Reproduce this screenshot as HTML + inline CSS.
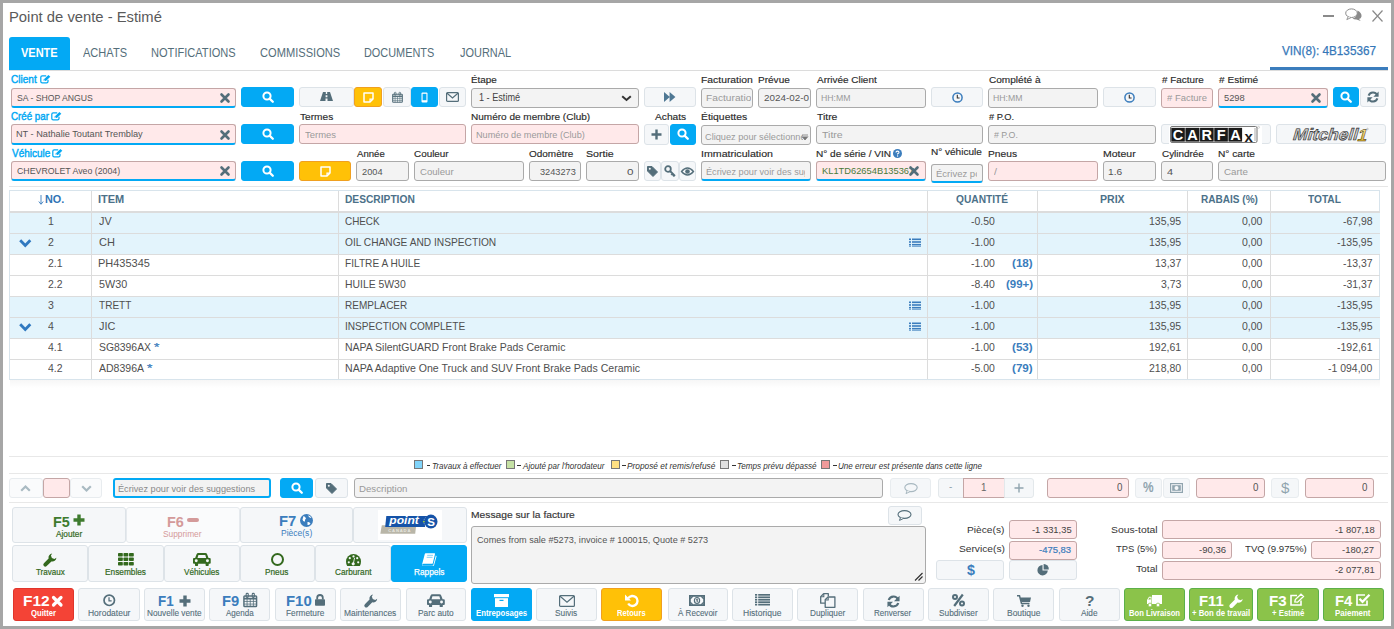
<!DOCTYPE html><html><head><meta charset="utf-8"><style>
*{box-sizing:border-box;margin:0;padding:0}
html,body{width:1394px;height:629px;overflow:hidden;background:#fff}
body{position:relative;font-family:"Liberation Sans",sans-serif}
.a{position:absolute}
.t{position:absolute;white-space:nowrap;line-height:1;transform-origin:0 0}
.inp{background:#f3f3f3;border:1px solid #aaa;border-radius:3px}
.pk{background:#ffe9ea;border:1px solid #c4a6a6;border-radius:3px}
.ul{border-bottom:2px solid #03a9f4}
.btn{background:#f5f7f9;border:1px solid #dde3e8;border-radius:3px}
.bb{background:#03a9f4;border:1px solid #03a9f4;border-radius:3px}
.by{background:#ffc107;border:1px solid #f0a020;border-radius:3px}
.bg{background:#8bc34a;border:1px solid #5cb04a;border-radius:3px}
.br{background:#f44336;border:1px solid #e0352b;border-radius:3px}
.hl{background:#dde3e6}
svg{position:absolute;overflow:visible}
</style></head><body>
<div class="a" style="left:0;top:0;width:1394px;height:629px;border:3px solid #a6a6a6"></div>
<div class="t" style="left:8.52px;top:10px;font-size:14px;color:#5a5a5a;transform:scaleX(1.0564);">Point de vente - Estimé</div>
<div class="a" style="left:1323px;top:15px;width:11px;height:1.5px;background:#8a8a8a"></div>
<svg style="left:1345px;top:8px" width="18" height="14" viewBox="0 0 18 14"><ellipse cx="6.5" cy="5.2" rx="5.8" ry="4.3" fill="#fff" stroke="#8a8a8a" stroke-width="1"/><path d="M3 9 L1.8 11.6 L6 9.6" fill="#fff" stroke="#8a8a8a" stroke-width="0.9"/><path d="M12.5 2.5 Q17 5 16.5 8.5 Q16 10.5 14 11 L15.8 13 L11.5 11.6 Q9 11.7 7.5 10.5 Q12.5 9.5 12.5 2.5Z" fill="#8a8a8a"/></svg>
<svg style="left:1372px;top:10px" width="11" height="12" viewBox="0 0 11 12"><path d="M0.5 0.5L10.5 11.5M10.5 0.5L0.5 11.5" stroke="#8a8a8a" stroke-width="1.2"/></svg>
<div class="a " style="left:9px;top:37px;width:61px;height:33px;background:#03a9f4;border-radius:3px 3px 0 0"></div>
<div class="t" style="left:21.44px;top:46px;font-size:13px;color:#fff;transform:scaleX(0.8464);font-weight:bold;">VENTE</div>
<div class="t" style="left:82.80px;top:46px;font-size:13px;color:#546e7a;transform:scaleX(0.8504);">ACHATS</div>
<div class="t" style="left:150.81px;top:46px;font-size:13px;color:#546e7a;transform:scaleX(0.8521);">NOTIFICATIONS</div>
<div class="t" style="left:260.04px;top:46px;font-size:13px;color:#546e7a;transform:scaleX(0.8540);">COMMISSIONS</div>
<div class="t" style="left:364.23px;top:46px;font-size:13px;color:#546e7a;transform:scaleX(0.8386);">DOCUMENTS</div>
<div class="t" style="left:459.64px;top:46px;font-size:13px;color:#546e7a;transform:scaleX(0.8425);">JOURNAL</div>
<div class="a " style="left:9px;top:70px;width:1379px;height:1px;background:#dcdcdc"></div>
<div class="t" style="left:1281.74px;top:44px;font-size:13px;color:#3577b8;transform:scaleX(0.9037);-webkit-text-stroke:0.25px #3577b8;">VIN(8): 4B135367</div>
<div class="a " style="left:1270px;top:67px;width:118px;height:3px;background:#3b7dbd"></div>
<div class="t" style="left:11.20px;top:74px;font-size:11px;color:#03a9f4;transform:scaleX(0.9127);-webkit-text-stroke:0.45px #03a9f4;">Client</div>
<svg style="left:39.9px;top:74.6px" width="10.5" height="8.5" viewBox="0 0 10.5 8.5"><path d="M6.2 0.9H2.2Q0.8 0.9 0.8 2.3V6.4Q0.8 7.8 2.2 7.8H6.6Q8 7.8 8 6.4V4.8" fill="none" stroke="#03a9f4" stroke-width="1.25"/><path d="M3.6 6L4 4.2L8.4 0L10.3 1.8L5.9 6Z" fill="#03a9f4"/><path d="M4.1 5.8L4.3 4.6L5.4 5.6Z" fill="#fff"/></svg>
<div class="t" style="left:471.21px;top:75px;font-size:9.5px;color:#2a2a2a;transform:scaleX(1.0420);-webkit-text-stroke:0.15px #2a2a2a;">Étape</div>
<div class="t" style="left:700.97px;top:75px;font-size:9.5px;color:#2a2a2a;transform:scaleX(1.0906);-webkit-text-stroke:0.15px #2a2a2a;">Facturation</div>
<div class="t" style="left:758.00px;top:75px;font-size:9.5px;color:#2a2a2a;transform:scaleX(1.0561);-webkit-text-stroke:0.15px #2a2a2a;">Prévue</div>
<div class="t" style="left:816.90px;top:75px;font-size:9.5px;color:#2a2a2a;transform:scaleX(1.0465);-webkit-text-stroke:0.15px #2a2a2a;">Arrivée Client</div>
<div class="t" style="left:988.50px;top:75px;font-size:9.5px;color:#2a2a2a;transform:scaleX(1.0599);-webkit-text-stroke:0.15px #2a2a2a;">Complété à</div>
<div class="t" style="left:1162.05px;top:75px;font-size:9.5px;color:#2a2a2a;transform:scaleX(1.0388);-webkit-text-stroke:0.15px #2a2a2a;"># Facture</div>
<div class="t" style="left:1219.25px;top:75px;font-size:9.5px;color:#2a2a2a;transform:scaleX(1.0609);-webkit-text-stroke:0.15px #2a2a2a;"># Estimé</div>
<div class="t" style="left:11.21px;top:111px;font-size:11px;color:#03a9f4;transform:scaleX(0.8865);-webkit-text-stroke:0.45px #03a9f4;">Créé par</div>
<svg style="left:51.2px;top:111.6px" width="10.5" height="8.5" viewBox="0 0 10.5 8.5"><path d="M6.2 0.9H2.2Q0.8 0.9 0.8 2.3V6.4Q0.8 7.8 2.2 7.8H6.6Q8 7.8 8 6.4V4.8" fill="none" stroke="#03a9f4" stroke-width="1.25"/><path d="M3.6 6L4 4.2L8.4 0L10.3 1.8L5.9 6Z" fill="#03a9f4"/><path d="M4.1 5.8L4.3 4.6L5.4 5.6Z" fill="#fff"/></svg>
<div class="t" style="left:299.70px;top:112px;font-size:9.5px;color:#2a2a2a;transform:scaleX(1.0673);-webkit-text-stroke:0.15px #2a2a2a;">Termes</div>
<div class="t" style="left:471.20px;top:112px;font-size:9.5px;color:#2a2a2a;transform:scaleX(1.0544);-webkit-text-stroke:0.15px #2a2a2a;">Numéro de membre (Club)</div>
<div class="t" style="left:654.80px;top:112px;font-size:9.5px;color:#2a2a2a;transform:scaleX(1.0735);-webkit-text-stroke:0.15px #2a2a2a;">Achats</div>
<div class="t" style="left:700.97px;top:112px;font-size:9.5px;color:#2a2a2a;transform:scaleX(1.0915);-webkit-text-stroke:0.15px #2a2a2a;">Étiquettes</div>
<div class="t" style="left:816.69px;top:112px;font-size:9.5px;color:#2a2a2a;transform:scaleX(1.0943);-webkit-text-stroke:0.15px #2a2a2a;">Titre</div>
<div class="t" style="left:988.95px;top:112px;font-size:9.5px;color:#2a2a2a;transform:scaleX(0.9800);-webkit-text-stroke:0.15px #2a2a2a;"># P.O.</div>
<div class="t" style="left:11.65px;top:148px;font-size:11px;color:#03a9f4;transform:scaleX(0.9079);-webkit-text-stroke:0.45px #03a9f4;">Véhicule</div>
<svg style="left:51.6px;top:148.6px" width="10.5" height="8.5" viewBox="0 0 10.5 8.5"><path d="M6.2 0.9H2.2Q0.8 0.9 0.8 2.3V6.4Q0.8 7.8 2.2 7.8H6.6Q8 7.8 8 6.4V4.8" fill="none" stroke="#03a9f4" stroke-width="1.25"/><path d="M3.6 6L4 4.2L8.4 0L10.3 1.8L5.9 6Z" fill="#03a9f4"/><path d="M4.1 5.8L4.3 4.6L5.4 5.6Z" fill="#fff"/></svg>
<div class="t" style="left:357.30px;top:149px;font-size:9.5px;color:#2a2a2a;transform:scaleX(1.0101);-webkit-text-stroke:0.15px #2a2a2a;">Année</div>
<div class="t" style="left:414.31px;top:149px;font-size:9.5px;color:#2a2a2a;transform:scaleX(1.0419);-webkit-text-stroke:0.15px #2a2a2a;">Couleur</div>
<div class="t" style="left:529.05px;top:149px;font-size:9.5px;color:#2a2a2a;transform:scaleX(1.0490);-webkit-text-stroke:0.15px #2a2a2a;">Odomètre</div>
<div class="t" style="left:586.12px;top:149px;font-size:9.5px;color:#2a2a2a;transform:scaleX(1.1153);-webkit-text-stroke:0.15px #2a2a2a;">Sortie</div>
<div class="t" style="left:700.84px;top:149px;font-size:9.5px;color:#2a2a2a;transform:scaleX(1.1170);-webkit-text-stroke:0.15px #2a2a2a;">Immatriculation</div>
<div class="t" style="left:816.29px;top:149px;font-size:9.5px;color:#2a2a2a;transform:scaleX(1.0606);-webkit-text-stroke:0.15px #2a2a2a;">N° de série / VIN</div>
<svg style="left:893px;top:149px" width="9" height="9" viewBox="0 0 9 9"><circle cx="4.5" cy="4.5" r="4.5" fill="#3b7dbd"/><path d="M3 3.6Q3 2.1 4.5 2.1Q6 2.1 6 3.4Q6 4.3 4.6 4.8V5.6" fill="none" stroke="#fff" stroke-width="1.1"/><circle cx="4.6" cy="7" r="0.65" fill="#fff"/></svg>
<div class="t" style="left:931.10px;top:147px;font-size:9.5px;color:#2a2a2a;transform:scaleX(1.0537);-webkit-text-stroke:0.15px #2a2a2a;">N° véhicule</div>
<div class="t" style="left:988.18px;top:149px;font-size:9.5px;color:#2a2a2a;transform:scaleX(1.0797);-webkit-text-stroke:0.15px #2a2a2a;">Pneus</div>
<div class="t" style="left:1103.26px;top:149px;font-size:9.5px;color:#2a2a2a;transform:scaleX(1.1033);-webkit-text-stroke:0.15px #2a2a2a;">Moteur</div>
<div class="t" style="left:1161.60px;top:149px;font-size:9.5px;color:#2a2a2a;transform:scaleX(1.0424);-webkit-text-stroke:0.15px #2a2a2a;">Cylindrée</div>
<div class="t" style="left:1218.49px;top:149px;font-size:9.5px;color:#2a2a2a;transform:scaleX(1.0722);-webkit-text-stroke:0.15px #2a2a2a;">N° carte</div>
<div class="a pk ul" style="left:11px;top:88px;width:225px;height:20px;"></div>
<div class="t" style="left:16.81px;top:93px;font-size:9.5px;color:#555;transform:scaleX(0.9106);">SA - SHOP ANGUS</div>
<svg style="left:219.5px;top:93px" width="10" height="10" viewBox="0 0 10 10"><path d="M1.5 1.5L8.5 8.5M8.5 1.5L1.5 8.5" stroke="#546e7a" stroke-width="2.6" stroke-linecap="round"/></svg>
<div class="a bb" style="left:241px;top:87px;width:53px;height:20px;"></div>
<svg style="left:261.5px;top:91px" width="12" height="12" viewBox="0 0 12 12"><circle cx="5" cy="5" r="3.6" fill="none" stroke="#fff" stroke-width="2"/><path d="M7.6 7.6L10.8 10.8" stroke="#fff" stroke-width="2.3" stroke-linecap="round"/></svg>
<div class="a btn" style="left:299px;top:87px;width:55px;height:20px;"></div>
<svg style="left:320px;top:92px" width="13" height="9" viewBox="0 0 13 9"><path d="M3 0H5.8V2H7.2V0H10L13 9H7.5V6.5H5.5V9H0Z M5.6 3.2H7.4V5.2H5.6Z" fill="#546e7a" fill-rule="evenodd"/></svg>
<div class="a by" style="left:354px;top:87px;width:28px;height:20px;"></div>
<svg style="left:362.5px;top:91.5px" width="11" height="11" viewBox="0 0 11 11"><path d="M1 1H10V7L7 10H1Z" fill="none" stroke="#fff" stroke-width="1.5" stroke-linejoin="round"/><path d="M7 10V7.2H10" fill="none" stroke="#fff" stroke-width="1.2"/></svg>
<div class="a btn" style="left:383px;top:87px;width:28px;height:20px;"></div>
<svg style="left:391.5px;top:91.5px" width="11" height="11" viewBox="0 0 11 11"><rect x="0.7" y="2.2" width="9.6" height="8.1" rx="0.6" fill="none" stroke="#546e7a" stroke-width="1.1"/><path d="M0.7 4.3H10.3" stroke="#546e7a" stroke-width="1.3"/><path d="M0.7 6.4H10.3M0.7 8.4H10.3M3.1 4.3V10.3M5.5 4.3V10.3M7.9 4.3V10.3" stroke="#546e7a" stroke-width="0.6"/><rect x="2.4" y="0.3" width="1.6" height="3" rx="0.6" fill="none" stroke="#546e7a" stroke-width="0.8"/><rect x="7" y="0.3" width="1.6" height="3" rx="0.6" fill="none" stroke="#546e7a" stroke-width="0.8"/></svg>
<div class="a bb" style="left:411px;top:87px;width:27px;height:20px;"></div>
<svg style="left:421px;top:91.5px" width="7" height="11" viewBox="0 0 7 11"><rect x="0.5" y="0.5" width="6" height="10" rx="1" fill="#fff"/><rect x="1.6" y="1.8" width="3.8" height="6.4" fill="#03a9f4"/></svg>
<div class="a btn" style="left:439px;top:87px;width:27px;height:20px;"></div>
<svg style="left:446px;top:92px" width="13" height="10" viewBox="0 0 13 10"><rect x="0.6" y="0.6" width="11.8" height="8.8" rx="1" fill="none" stroke="#546e7a" stroke-width="1.2"/><path d="M0.8 1L6.5 6.0L12.2 1" fill="none" stroke="#546e7a" stroke-width="1.2"/></svg>
<div class="a inp" style="left:471px;top:88px;width:168px;height:20px;"></div>
<div class="t" style="left:479.42px;top:92px;font-size:10.5px;color:#444;transform:scaleX(0.8698);">1 - Estimé</div>
<svg style="left:620.8px;top:95px" width="11" height="6.5" viewBox="0 0 11 6.5"><path d="M1.2 1.2L5.5 5.0L9.8 1.2" fill="none" stroke="#333" stroke-width="2"/></svg>
<div class="a btn" style="left:644px;top:87px;width:52px;height:20px;"></div>
<svg style="left:663.8px;top:92.3px" width="11.5" height="10" viewBox="0 0 11.5 10"><path d="M0 0L5.8 5L0 10Z M5.6 0L11.4 5L5.6 10Z" fill="#4f7894"/></svg>
<div class="a inp" style="left:701px;top:88px;width:52px;height:20px;"></div>
<div class="a" style="left:702px;top:93px;width:49px;height:14.25px;overflow:hidden"><div class="t" style="left:3.98px;top:0px;font-size:9.5px;color:#9a9a9a;transform:scaleX(1.0732);">Facturation</div></div>
<div class="a inp" style="left:758px;top:88px;width:53px;height:20px;"></div>
<div class="a" style="left:759px;top:93px;width:50px;height:14.25px;overflow:hidden"><div class="t" style="left:5.11px;top:0px;font-size:9.5px;color:#555;transform:scaleX(1.0390);">2024-02-07</div></div>
<div class="a inp" style="left:816px;top:88px;width:110px;height:20px;"></div>
<div class="t" style="left:821.31px;top:93px;font-size:9.5px;color:#9a9a9a;transform:scaleX(0.9139);">HH:MM</div>
<div class="a btn" style="left:931px;top:87px;width:52px;height:20px;"></div>
<svg style="left:951.5px;top:91.5px" width="11" height="11" viewBox="0 0 11 11"><circle cx="5.5" cy="5.5" r="4.6" fill="none" stroke="#3b7dbd" stroke-width="1.5"/><path d="M5.3 2.8V6H7.6" fill="none" stroke="#333" stroke-width="1.1"/></svg>
<div class="a inp" style="left:988px;top:88px;width:110px;height:20px;"></div>
<div class="t" style="left:993.31px;top:93px;font-size:9.5px;color:#9a9a9a;transform:scaleX(0.9139);">HH:MM</div>
<div class="a btn" style="left:1103px;top:87px;width:53px;height:20px;"></div>
<svg style="left:1124px;top:91.5px" width="11" height="11" viewBox="0 0 11 11"><circle cx="5.5" cy="5.5" r="4.6" fill="none" stroke="#3b7dbd" stroke-width="1.5"/><path d="M5.3 2.8V6H7.6" fill="none" stroke="#333" stroke-width="1.1"/></svg>
<div class="a pk" style="left:1161px;top:88px;width:52px;height:20px;"></div>
<div class="t" style="left:1167.25px;top:93px;font-size:9.5px;color:#9a9a9a;transform:scaleX(0.9959);"># Facture</div>
<div class="a pk ul" style="left:1218px;top:88px;width:110px;height:20px;"></div>
<div class="t" style="left:1223.93px;top:93px;font-size:9.5px;color:#555;transform:scaleX(0.9815);">5298</div>
<svg style="left:1311px;top:93px" width="10" height="10" viewBox="0 0 10 10"><path d="M1.5 1.5L8.5 8.5M8.5 1.5L1.5 8.5" stroke="#546e7a" stroke-width="2.6" stroke-linecap="round"/></svg>
<div class="a bb" style="left:1333px;top:87px;width:26px;height:20px;"></div>
<svg style="left:1340px;top:91px" width="12" height="12" viewBox="0 0 12 12"><circle cx="5" cy="5" r="3.6" fill="none" stroke="#fff" stroke-width="2"/><path d="M7.6 7.6L10.8 10.8" stroke="#fff" stroke-width="2.3" stroke-linecap="round"/></svg>
<div class="a btn" style="left:1360px;top:87px;width:26px;height:20px;"></div>
<svg style="left:1367px;top:91px" width="12" height="12" viewBox="0 0 12 12"><path d="M10.2 4.2A4.6 4.6 0 0 0 1.6 4.6" fill="none" stroke="#546e7a" stroke-width="2"/><path d="M11.6 0.6V5.8H6.4Z" fill="#546e7a"/><path d="M1.8 7.8A4.6 4.6 0 0 0 10.4 7.4" fill="none" stroke="#546e7a" stroke-width="2"/><path d="M0.4 11.4V6.2H5.6Z" fill="#546e7a"/></svg>
<div class="a pk ul" style="left:11px;top:124px;width:225px;height:21px;"></div>
<div class="t" style="left:16.47px;top:129px;font-size:9.5px;color:#555;transform:scaleX(0.9656);">NT - Nathalie Toutant Tremblay</div>
<svg style="left:219.5px;top:129.5px" width="10" height="10" viewBox="0 0 10 10"><path d="M1.5 1.5L8.5 8.5M8.5 1.5L1.5 8.5" stroke="#546e7a" stroke-width="2.6" stroke-linecap="round"/></svg>
<div class="a bb" style="left:241px;top:124px;width:53px;height:20px;"></div>
<svg style="left:261.5px;top:128px" width="12" height="12" viewBox="0 0 12 12"><circle cx="5" cy="5" r="3.6" fill="none" stroke="#fff" stroke-width="2"/><path d="M7.6 7.6L10.8 10.8" stroke="#fff" stroke-width="2.3" stroke-linecap="round"/></svg>
<div class="a pk" style="left:299px;top:124px;width:167px;height:20px;"></div>
<div class="t" style="left:304.81px;top:130px;font-size:9.5px;color:#9a9a9a;transform:scaleX(0.9955);">Termes</div>
<div class="a pk" style="left:471px;top:124px;width:168px;height:20px;"></div>
<div class="t" style="left:476.27px;top:130px;font-size:9.5px;color:#9a9a9a;transform:scaleX(0.9630);">Numéro de membre (Club)</div>
<div class="a btn" style="left:644px;top:124px;width:25px;height:21px;"></div>
<svg style="left:651px;top:129px" width="11" height="11" viewBox="0 0 11 11"><path d="M5.5 0.5V10.5M0.5 5.5H10.5" stroke="#546e7a" stroke-width="2.4"/></svg>
<div class="a bb" style="left:670px;top:124px;width:26px;height:21px;"></div>
<svg style="left:677px;top:128px" width="12" height="12" viewBox="0 0 12 12"><circle cx="5" cy="5" r="3.6" fill="none" stroke="#fff" stroke-width="2"/><path d="M7.6 7.6L10.8 10.8" stroke="#fff" stroke-width="2.3" stroke-linecap="round"/></svg>
<div class="a inp" style="left:701px;top:125px;width:110px;height:20px;"></div>
<div class="a" style="left:702px;top:132px;width:103px;height:14.25px;overflow:hidden"><div class="t" style="left:2.54px;top:0px;font-size:9.5px;color:#9a9a9a;transform:scaleX(0.9668);">Cliquez pour sélectionner</div></div>
<div class="a " style="left:803px;top:133px;width:6px;height:8px;background:#f3f3f3"></div>
<svg style="left:802px;top:135px" width="6" height="5" viewBox="0 0 6 5"><path d="M0 0H6M0 1.5L3 5L6 1.5" stroke="#777" fill="#777" stroke-width="0.8"/></svg>
<div class="a inp" style="left:816px;top:125px;width:167px;height:19px;"></div>
<div class="t" style="left:821.79px;top:130px;font-size:9.5px;color:#9a9a9a;transform:scaleX(1.1110);">Titre</div>
<div class="a inp" style="left:988px;top:125px;width:168px;height:19px;"></div>
<div class="t" style="left:993.96px;top:130px;font-size:9.5px;color:#9a9a9a;transform:scaleX(0.9276);"># P.O.</div>
<div class="a btn" style="left:1161px;top:124px;width:110px;height:20px;"></div>
<div class="a " style="left:1169px;top:125.5px;width:92.5px;height:18.0px;background:#fff"></div>
<svg style="left:1170.4px;top:126.2px" width="88" height="17" viewBox="0 0 88 17"><rect x="0.5" y="0.5" width="86.5" height="16" rx="1.5" fill="#fff" stroke="#777" stroke-width="1"/><rect x="1.4" y="1.9" width="70.6" height="13.6" fill="#999"/><rect x="1.4" y="1.9" width="13.3" height="13.6" fill="#1a1a1a"/><text x="8.05" y="14.2" text-anchor="middle" font-family="Liberation Sans" font-weight="bold" font-size="14.5" fill="#fff">C</text><rect x="15.75" y="1.9" width="13.3" height="13.6" fill="#1a1a1a"/><text x="22.4" y="14.2" text-anchor="middle" font-family="Liberation Sans" font-weight="bold" font-size="14.5" fill="#fff">A</text><rect x="30.099999999999998" y="1.9" width="13.3" height="13.6" fill="#1a1a1a"/><text x="36.75" y="14.2" text-anchor="middle" font-family="Liberation Sans" font-weight="bold" font-size="14.5" fill="#fff">R</text><rect x="44.449999999999996" y="1.9" width="13.3" height="13.6" fill="#1a1a1a"/><text x="51.099999999999994" y="14.2" text-anchor="middle" font-family="Liberation Sans" font-weight="bold" font-size="14.5" fill="#fff">F</text><rect x="58.8" y="1.9" width="13.3" height="13.6" fill="#1a1a1a"/><text x="65.45" y="14.2" text-anchor="middle" font-family="Liberation Sans" font-weight="bold" font-size="14.5" fill="#fff">A</text><text x="78.6" y="15.5" text-anchor="middle" font-family="Liberation Sans" font-weight="bold" font-size="15" fill="#1a1a1a">x</text><path d="M85 2V15" stroke="#999" stroke-width="0.8"/><circle cx="88.5" cy="1.3" r="1" fill="none" stroke="#999" stroke-width="0.4"/></svg>
<div class="a btn" style="left:1276px;top:124px;width:110px;height:20px;"></div>
<svg style="left:1290px;top:126.5px" width="80" height="16" viewBox="0 0 80 16"><defs><linearGradient id="mg" x1="0" y1="0" x2="0" y2="1"><stop offset="0" stop-color="#a8a8a8"/><stop offset="0.5" stop-color="#d8d8d8"/><stop offset="1" stop-color="#9a9a9a"/></linearGradient><linearGradient id="mg2" x1="0" y1="0" x2="0" y2="1"><stop offset="0" stop-color="#fff3b0"/><stop offset="1" stop-color="#d8a818"/></linearGradient></defs><g transform="translate(0,0.5) scale(1,0.86) skewX(-14)"><text x="5.5" y="14.5" font-family="Liberation Sans" font-weight="bold" font-size="19" fill="url(#mg)" stroke="#2a2a2a" stroke-width="0.7" textLength="65" lengthAdjust="spacingAndGlyphs">Mitchell</text><text x="70.5" y="15.8" font-family="Liberation Sans" font-weight="bold" font-size="20" fill="url(#mg2)" stroke="#3a2a05" stroke-width="0.6" textLength="9.5" lengthAdjust="spacingAndGlyphs">1</text></g><circle cx="77.5" cy="2" r="0.8" fill="none" stroke="#888" stroke-width="0.4"/></svg>
<div class="a pk ul" style="left:11px;top:161px;width:225px;height:20px;"></div>
<div class="t" style="left:16.76px;top:166px;font-size:9.5px;color:#555;transform:scaleX(0.9246);">CHEVROLET Aveo (2004)</div>
<svg style="left:219.5px;top:166px" width="10" height="10" viewBox="0 0 10 10"><path d="M1.5 1.5L8.5 8.5M8.5 1.5L1.5 8.5" stroke="#546e7a" stroke-width="2.6" stroke-linecap="round"/></svg>
<div class="a bb" style="left:241px;top:161px;width:53px;height:20px;"></div>
<svg style="left:261.5px;top:165px" width="12" height="12" viewBox="0 0 12 12"><circle cx="5" cy="5" r="3.6" fill="none" stroke="#fff" stroke-width="2"/><path d="M7.6 7.6L10.8 10.8" stroke="#fff" stroke-width="2.3" stroke-linecap="round"/></svg>
<div class="a by" style="left:299px;top:161px;width:52px;height:20px;"></div>
<svg style="left:320px;top:165.5px" width="11" height="11" viewBox="0 0 11 11"><path d="M1 1H10V7L7 10H1Z" fill="none" stroke="#fff" stroke-width="1.5" stroke-linejoin="round"/><path d="M7 10V7.2H10" fill="none" stroke="#fff" stroke-width="1.2"/></svg>
<div class="a inp" style="left:356px;top:161px;width:53px;height:20px;"></div>
<div class="t" style="left:362.14px;top:167px;font-size:9.5px;color:#555;transform:scaleX(0.9717);">2004</div>
<div class="a inp" style="left:414px;top:161px;width:110px;height:20px;"></div>
<div class="t" style="left:419.52px;top:167px;font-size:9.5px;color:#9a9a9a;transform:scaleX(1.0113);">Couleur</div>
<div class="a inp" style="left:529px;top:161px;width:52px;height:20px;"></div>
<div class="t" style="left:539.73px;top:167px;font-size:9.5px;color:#555;transform:scaleX(0.9670);">3243273</div>
<div class="a inp" style="left:586px;top:161px;width:53px;height:20px;"></div>
<div class="t" style="left:627.43px;top:167px;font-size:9.5px;color:#555;transform:scaleX(1.2281);">0</div>
<div class="a btn" style="left:644px;top:161px;width:17px;height:20px;"></div>
<svg style="left:646.5px;top:165.5px" width="11" height="11" viewBox="0 0 11 11"><path d="M0.5 0.5H5L10.5 6L6 10.5L0.5 5Z" fill="#546e7a" stroke="#546e7a" stroke-linejoin="round"/><circle cx="2.8" cy="2.8" r="1" fill="#f5f7f9"/></svg>
<div class="a btn" style="left:661px;top:161px;width:18px;height:20px;"></div>
<svg style="left:664px;top:165px" width="12" height="12" viewBox="0 0 12 12"><circle cx="4" cy="4" r="2.8" fill="none" stroke="#546e7a" stroke-width="1.8"/><path d="M6 6L11 11M8.5 8.5L7.2 9.8M10 10L8.8 11.2" stroke="#546e7a" stroke-width="1.8"/></svg>
<div class="a btn" style="left:679px;top:161px;width:17px;height:20px;"></div>
<svg style="left:681px;top:166.5px" width="13" height="9" viewBox="0 0 13 9"><path d="M0.5 4.5Q6.5 -2.5 12.5 4.5Q6.5 11.5 0.5 4.5Z" fill="none" stroke="#546e7a" stroke-width="1.3"/><circle cx="6.5" cy="4.5" r="2.3" fill="#546e7a"/></svg>
<div class="a inp ul" style="left:701px;top:161px;width:110px;height:20px;"></div>
<div class="a" style="left:702px;top:167px;width:103px;height:14.25px;overflow:hidden"><div class="t" style="left:4.27px;top:0px;font-size:9.5px;color:#9a9a9a;transform:scaleX(0.9650);">Écrivez pour voir des suggestions</div></div>
<div class="a pk ul" style="left:816px;top:161px;width:110px;height:20px;"></div>
<div class="t" style="left:821.65px;top:166px;font-size:9.5px;color:#4a7a3a;transform:scaleX(0.9809);">KL1TD62654B135367</div>
<svg style="left:909px;top:166.3px" width="10" height="10" viewBox="0 0 10 10"><path d="M1.5 1.5L8.5 8.5M8.5 1.5L1.5 8.5" stroke="#546e7a" stroke-width="2.6" stroke-linecap="round"/></svg>
<div class="a inp ul" style="left:931px;top:164px;width:52px;height:19px;"></div>
<div class="a" style="left:932px;top:169px;width:45px;height:14.25px;overflow:hidden"><div class="t" style="left:4.24px;top:0px;font-size:9.5px;color:#9a9a9a;transform:scaleX(1.0025);">Écrivez pour voir</div></div>
<div class="a pk" style="left:988px;top:161px;width:110px;height:20px;"></div>
<div class="t" style="left:994.00px;top:167px;font-size:9.5px;color:#9a9a9a;transform:scaleX(1.1278);">/</div>
<div class="a inp" style="left:1103px;top:161px;width:53px;height:20px;"></div>
<div class="t" style="left:1108.24px;top:167px;font-size:9.5px;color:#555;transform:scaleX(1.0733);">1.6</div>
<div class="a inp" style="left:1161px;top:161px;width:52px;height:20px;"></div>
<div class="t" style="left:1166.78px;top:167px;font-size:9.5px;color:#555;transform:scaleX(1.1464);">4</div>
<div class="a inp" style="left:1218px;top:161px;width:168px;height:20px;"></div>
<div class="t" style="left:1223.51px;top:167px;font-size:9.5px;color:#9a9a9a;transform:scaleX(1.0302);">Carte</div>
<div class="a " style="left:9px;top:186px;width:1379px;height:1px;background:#e6e6e6"></div>
<div class="a " style="left:10px;top:380px;width:1370px;height:8px;background:linear-gradient(#f6f6f6,#fff)"></div>
<div class="a " style="left:9px;top:190px;width:1371px;height:190px;border:1px solid #d8e4ec;background:#fff"></div>
<div class="a " style="left:10px;top:212px;width:1370px;height:21px;background:#e3f4fc"></div>
<div class="a " style="left:10px;top:233px;width:1370px;height:21px;background:#e3f4fc"></div>
<div class="a " style="left:10px;top:296px;width:1370px;height:21px;background:#e3f4fc"></div>
<div class="a " style="left:10px;top:317px;width:1370px;height:21px;background:#e3f4fc"></div>
<div class="a " style="left:10px;top:211px;width:1370px;height:2px;background:#dcdcdc"></div>
<div class="a " style="left:10px;top:233px;width:1370px;height:1px;background:#dcdcdc"></div>
<div class="a " style="left:10px;top:254px;width:1370px;height:1px;background:#dcdcdc"></div>
<div class="a " style="left:10px;top:275px;width:1370px;height:1px;background:#dcdcdc"></div>
<div class="a " style="left:10px;top:296px;width:1370px;height:1px;background:#dcdcdc"></div>
<div class="a " style="left:10px;top:317px;width:1370px;height:1px;background:#dcdcdc"></div>
<div class="a " style="left:10px;top:338px;width:1370px;height:1px;background:#dcdcdc"></div>
<div class="a " style="left:10px;top:359px;width:1370px;height:1px;background:#dcdcdc"></div>
<div class="a " style="left:91px;top:191px;width:1px;height:188px;background:#dcdcdc"></div>
<div class="a " style="left:338px;top:191px;width:1px;height:188px;background:#dcdcdc"></div>
<div class="a " style="left:927px;top:191px;width:1px;height:188px;background:#dcdcdc"></div>
<div class="a " style="left:1037px;top:191px;width:1px;height:188px;background:#dcdcdc"></div>
<div class="a " style="left:1187px;top:191px;width:1px;height:188px;background:#dcdcdc"></div>
<div class="a " style="left:1270px;top:191px;width:1px;height:188px;background:#dcdcdc"></div>
<svg style="left:38px;top:195px" width="6" height="10" viewBox="0 0 6 10"><path d="M3 0V9M0.8 6.5L3 9.3L5.2 6.5" fill="none" stroke="#3b7dbd" stroke-width="0.9"/></svg>
<div class="t" style="left:44.80px;top:194px;font-size:11px;color:#2f74b5;transform:scaleX(0.9837);font-weight:bold;">NO.</div>
<div class="t" style="left:98.49px;top:194px;font-size:11px;color:#4c7189;transform:scaleX(0.9998);font-weight:bold;">ITEM</div>
<div class="t" style="left:345.24px;top:194px;font-size:11px;color:#4c7189;transform:scaleX(0.9281);font-weight:bold;">DESCRIPTION</div>
<div class="t" style="left:956.49px;top:194px;font-size:11px;color:#4c7189;transform:scaleX(0.9262);font-weight:bold;">QUANTITÉ</div>
<div class="t" style="left:1099.81px;top:194px;font-size:11px;color:#4c7189;transform:scaleX(0.9595);font-weight:bold;">PRIX</div>
<div class="t" style="left:1200.55px;top:194px;font-size:11px;color:#4c7189;transform:scaleX(0.9132);font-weight:bold;">RABAIS (%)</div>
<div class="t" style="left:1308.40px;top:194px;font-size:11px;color:#4c7189;transform:scaleX(0.9233);font-weight:bold;">TOTAL</div>
<div class="t" style="left:47.71px;top:217px;font-size:10.3px;color:#4f4f4f;transform:scaleX(1.0230);">1</div>
<div class="t" style="left:99.04px;top:217px;font-size:10.3px;color:#4f4f4f;transform:scaleX(1.0514);">JV</div>
<div class="t" style="left:345.41px;top:217px;font-size:10.3px;color:#4f4f4f;transform:scaleX(0.9596);">CHECK</div>
<div class="t" style="left:970.75px;top:217px;font-size:10.3px;color:#4f4f4f;transform:scaleX(1.0142);">-0.50</div>
<div class="t" style="left:1148.77px;top:217px;font-size:10.3px;color:#4f4f4f;transform:scaleX(1.0200);">135,95</div>
<div class="t" style="left:1242.47px;top:217px;font-size:10.3px;color:#4f4f4f;transform:scaleX(1.0183);">0,00</div>
<div class="t" style="left:1342.85px;top:217px;font-size:10.3px;color:#4f4f4f;transform:scaleX(1.0159);">-67,98</div>
<div class="t" style="left:47.97px;top:238px;font-size:10.3px;color:#4f4f4f;transform:scaleX(1.0230);">2</div>
<div class="t" style="left:98.65px;top:238px;font-size:10.3px;color:#4f4f4f;transform:scaleX(1.0672);">CH</div>
<div class="t" style="left:345.44px;top:238px;font-size:10.3px;color:#4f4f4f;transform:scaleX(0.9887);">OIL CHANGE AND INSPECTION</div>
<div class="t" style="left:970.75px;top:238px;font-size:10.3px;color:#4f4f4f;transform:scaleX(1.0142);">-1.00</div>
<div class="t" style="left:1148.77px;top:238px;font-size:10.3px;color:#4f4f4f;transform:scaleX(1.0200);">135,95</div>
<div class="t" style="left:1242.47px;top:238px;font-size:10.3px;color:#4f4f4f;transform:scaleX(1.0183);">0,00</div>
<div class="t" style="left:1337.01px;top:238px;font-size:10.3px;color:#4f4f4f;transform:scaleX(1.0171);">-135,95</div>
<svg style="left:18.8px;top:238.7px" width="12.5" height="8" viewBox="0 0 12.5 8"><path d="M1.2 1.2L6.25 6.5L11.3 1.2" fill="none" stroke="#3079c0" stroke-width="2.8"/></svg>
<svg style="left:909px;top:237.5px" width="12" height="9" viewBox="0 0 12 9"><rect x="0" y="0.5" width="2" height="1.6" fill="#3b7dbd"/><rect x="3" y="0.5" width="9" height="1.6" fill="#3b7dbd"/><rect x="0" y="3.2" width="2" height="1.6" fill="#3b7dbd"/><rect x="3" y="3.2" width="9" height="1.6" fill="#3b7dbd"/><rect x="0" y="5.9" width="2" height="1.6" fill="#3b7dbd"/><rect x="3" y="5.9" width="9" height="1.6" fill="#3b7dbd"/><rect x="0" y="8.4" width="2" height="0.6" fill="#3b7dbd"/><rect x="3" y="8.4" width="9" height="0.6" fill="#3b7dbd"/></svg>
<div class="t" style="left:47.98px;top:259px;font-size:10.3px;color:#4f4f4f;transform:scaleX(1.0164);">2.1</div>
<div class="t" style="left:98.32px;top:259px;font-size:10.3px;color:#4f4f4f;transform:scaleX(1.0668);">PH435345</div>
<div class="t" style="left:345.09px;top:259px;font-size:10.3px;color:#4f4f4f;transform:scaleX(0.9835);">FILTRE A HUILE</div>
<div class="t" style="left:970.75px;top:259px;font-size:10.3px;color:#4f4f4f;transform:scaleX(1.0142);">-1.00</div>
<div class="t" style="left:1012.02px;top:258px;font-size:11px;color:#3b7dbd;transform:scaleX(1.0606);font-weight:bold;">(18)</div>
<div class="t" style="left:1154.78px;top:259px;font-size:10.3px;color:#4f4f4f;transform:scaleX(1.0193);">13,37</div>
<div class="t" style="left:1242.47px;top:259px;font-size:10.3px;color:#4f4f4f;transform:scaleX(1.0183);">0,00</div>
<div class="t" style="left:1342.96px;top:259px;font-size:10.3px;color:#4f4f4f;transform:scaleX(1.0159);">-13,37</div>
<div class="t" style="left:47.98px;top:280px;font-size:10.3px;color:#4f4f4f;transform:scaleX(1.0164);">2.2</div>
<div class="t" style="left:98.77px;top:280px;font-size:10.3px;color:#4f4f4f;transform:scaleX(1.0456);">5W30</div>
<div class="t" style="left:345.07px;top:280px;font-size:10.3px;color:#4f4f4f;transform:scaleX(1.0099);">HUILE 5W30</div>
<div class="t" style="left:970.75px;top:280px;font-size:10.3px;color:#4f4f4f;transform:scaleX(1.0142);">-8.40</div>
<div class="t" style="left:1005.63px;top:279px;font-size:11px;color:#3b7dbd;transform:scaleX(1.0435);font-weight:bold;">(99+)</div>
<div class="t" style="left:1160.52px;top:280px;font-size:10.3px;color:#4f4f4f;transform:scaleX(1.0183);">3,73</div>
<div class="t" style="left:1242.47px;top:280px;font-size:10.3px;color:#4f4f4f;transform:scaleX(1.0183);">0,00</div>
<div class="t" style="left:1342.96px;top:280px;font-size:10.3px;color:#4f4f4f;transform:scaleX(1.0159);">-31,37</div>
<div class="t" style="left:48.08px;top:301px;font-size:10.3px;color:#4f4f4f;transform:scaleX(1.0230);">3</div>
<div class="t" style="left:99.00px;top:301px;font-size:10.3px;color:#4f4f4f;transform:scaleX(0.9770);">TRETT</div>
<div class="t" style="left:345.10px;top:301px;font-size:10.3px;color:#4f4f4f;transform:scaleX(0.9717);">REMPLACER</div>
<div class="t" style="left:970.75px;top:301px;font-size:10.3px;color:#4f4f4f;transform:scaleX(1.0142);">-1.00</div>
<div class="t" style="left:1148.77px;top:301px;font-size:10.3px;color:#4f4f4f;transform:scaleX(1.0200);">135,95</div>
<div class="t" style="left:1242.47px;top:301px;font-size:10.3px;color:#4f4f4f;transform:scaleX(1.0183);">0,00</div>
<div class="t" style="left:1337.01px;top:301px;font-size:10.3px;color:#4f4f4f;transform:scaleX(1.0171);">-135,95</div>
<svg style="left:909px;top:300.5px" width="12" height="9" viewBox="0 0 12 9"><rect x="0" y="0.5" width="2" height="1.6" fill="#3b7dbd"/><rect x="3" y="0.5" width="9" height="1.6" fill="#3b7dbd"/><rect x="0" y="3.2" width="2" height="1.6" fill="#3b7dbd"/><rect x="3" y="3.2" width="9" height="1.6" fill="#3b7dbd"/><rect x="0" y="5.9" width="2" height="1.6" fill="#3b7dbd"/><rect x="3" y="5.9" width="9" height="1.6" fill="#3b7dbd"/><rect x="0" y="8.4" width="2" height="0.6" fill="#3b7dbd"/><rect x="3" y="8.4" width="9" height="0.6" fill="#3b7dbd"/></svg>
<div class="t" style="left:48.29px;top:322px;font-size:10.3px;color:#4f4f4f;transform:scaleX(1.0230);">4</div>
<div class="t" style="left:99.04px;top:322px;font-size:10.3px;color:#4f4f4f;transform:scaleX(1.0579);">JIC</div>
<div class="t" style="left:344.99px;top:322px;font-size:10.3px;color:#4f4f4f;transform:scaleX(0.9824);">INSPECTION COMPLETE</div>
<div class="t" style="left:970.75px;top:322px;font-size:10.3px;color:#4f4f4f;transform:scaleX(1.0142);">-1.00</div>
<div class="t" style="left:1148.77px;top:322px;font-size:10.3px;color:#4f4f4f;transform:scaleX(1.0200);">135,95</div>
<div class="t" style="left:1242.47px;top:322px;font-size:10.3px;color:#4f4f4f;transform:scaleX(1.0183);">0,00</div>
<div class="t" style="left:1337.01px;top:322px;font-size:10.3px;color:#4f4f4f;transform:scaleX(1.0171);">-135,95</div>
<svg style="left:18.8px;top:322.7px" width="12.5" height="8" viewBox="0 0 12.5 8"><path d="M1.2 1.2L6.25 6.5L11.3 1.2" fill="none" stroke="#3079c0" stroke-width="2.8"/></svg>
<svg style="left:909px;top:321.5px" width="12" height="9" viewBox="0 0 12 9"><rect x="0" y="0.5" width="2" height="1.6" fill="#3b7dbd"/><rect x="3" y="0.5" width="9" height="1.6" fill="#3b7dbd"/><rect x="0" y="3.2" width="2" height="1.6" fill="#3b7dbd"/><rect x="3" y="3.2" width="9" height="1.6" fill="#3b7dbd"/><rect x="0" y="5.9" width="2" height="1.6" fill="#3b7dbd"/><rect x="3" y="5.9" width="9" height="1.6" fill="#3b7dbd"/><rect x="0" y="8.4" width="2" height="0.6" fill="#3b7dbd"/><rect x="3" y="8.4" width="9" height="0.6" fill="#3b7dbd"/></svg>
<div class="t" style="left:48.29px;top:343px;font-size:10.3px;color:#4f4f4f;transform:scaleX(1.0164);">4.1</div>
<div class="t" style="left:98.73px;top:343px;font-size:10.3px;color:#4f4f4f;transform:scaleX(1.0092);">SG8396AX</div>
<div class="t" style="left:153.59px;top:342px;font-size:11px;color:#3b7dbd;transform:scaleX(1.2626);-webkit-text-stroke:0.25px #3b7dbd;">*</div>
<div class="t" style="left:345.06px;top:343px;font-size:10.3px;color:#4f4f4f;transform:scaleX(1.0172);">NAPA SilentGUARD Front Brake Pads Ceramic</div>
<div class="t" style="left:970.75px;top:343px;font-size:10.3px;color:#4f4f4f;transform:scaleX(1.0142);">-1.00</div>
<div class="t" style="left:1012.02px;top:342px;font-size:11px;color:#3b7dbd;transform:scaleX(1.0606);font-weight:bold;">(53)</div>
<div class="t" style="left:1148.82px;top:343px;font-size:10.3px;color:#4f4f4f;transform:scaleX(1.0200);">192,61</div>
<div class="t" style="left:1242.47px;top:343px;font-size:10.3px;color:#4f4f4f;transform:scaleX(1.0183);">0,00</div>
<div class="t" style="left:1337.06px;top:343px;font-size:10.3px;color:#4f4f4f;transform:scaleX(1.0171);">-192,61</div>
<div class="t" style="left:48.29px;top:364px;font-size:10.3px;color:#4f4f4f;transform:scaleX(1.0164);">4.2</div>
<div class="t" style="left:99.20px;top:364px;font-size:10.3px;color:#4f4f4f;transform:scaleX(1.0208);">AD8396A</div>
<div class="t" style="left:147.29px;top:363px;font-size:11px;color:#3b7dbd;transform:scaleX(1.2626);-webkit-text-stroke:0.25px #3b7dbd;">*</div>
<div class="t" style="left:345.06px;top:364px;font-size:10.3px;color:#4f4f4f;transform:scaleX(1.0255);">NAPA Adaptive One Truck and SUV Front Brake Pads Ceramic</div>
<div class="t" style="left:970.75px;top:364px;font-size:10.3px;color:#4f4f4f;transform:scaleX(1.0142);">-5.00</div>
<div class="t" style="left:1012.02px;top:363px;font-size:11px;color:#3b7dbd;transform:scaleX(1.0606);font-weight:bold;">(79)</div>
<div class="t" style="left:1148.72px;top:364px;font-size:10.3px;color:#4f4f4f;transform:scaleX(1.0200);">218,80</div>
<div class="t" style="left:1242.47px;top:364px;font-size:10.3px;color:#4f4f4f;transform:scaleX(1.0183);">0,00</div>
<div class="t" style="left:1328.25px;top:364px;font-size:10.3px;color:#4f4f4f;transform:scaleX(1.0161);">-1 094,00</div>
<div class="a " style="left:9px;top:456px;width:1379px;height:1px;background:#e8e8e8"></div>
<div class="a " style="left:9px;top:473px;width:1379px;height:1px;background:#e8e8e8"></div>
<div class="a " style="left:414.1px;top:460px;width:9.0px;height:9px;background:#81d4fa;border:1px solid #777"></div>
<div class="a " style="left:426.5px;top:465px;width:3.7999999999999545px;height:1.3000000000000114px;background:#333"></div>
<div class="t" style="left:431.67px;top:462px;font-size:8.5px;color:#333;transform:scaleX(0.9567);font-style:italic;">Travaux à effectuer</div>
<div class="a " style="left:506.2px;top:460px;width:9.000000000000057px;height:9px;background:#c5e1a5;border:1px solid #777"></div>
<div class="a " style="left:517.1px;top:465px;width:3.7999999999999545px;height:1.3000000000000114px;background:#333"></div>
<div class="t" style="left:523.40px;top:462px;font-size:8.5px;color:#333;transform:scaleX(0.9486);font-style:italic;">Ajouté par l&#x27;horodateur</div>
<div class="a " style="left:610.5px;top:460px;width:9.0px;height:9px;background:#ffe082;border:1px solid #777"></div>
<div class="a " style="left:621.8000000000001px;top:465px;width:3.7999999999999545px;height:1.3000000000000114px;background:#333"></div>
<div class="t" style="left:627.45px;top:462px;font-size:8.5px;color:#333;transform:scaleX(0.9791);font-style:italic;">Proposé et remis/refusé</div>
<div class="a " style="left:719.8px;top:460px;width:9.0px;height:9px;background:#e0e0e0;border:1px solid #777"></div>
<div class="a " style="left:731.8000000000001px;top:465px;width:3.7999999999999545px;height:1.3000000000000114px;background:#333"></div>
<div class="t" style="left:736.97px;top:462px;font-size:8.5px;color:#333;transform:scaleX(0.9546);font-style:italic;">Temps prévu dépassé</div>
<div class="a " style="left:821.2px;top:460px;width:9.0px;height:9px;background:#ef9a9a;border:1px solid #777"></div>
<div class="a " style="left:832.9px;top:465px;width:3.7999999999999545px;height:1.3000000000000114px;background:#333"></div>
<div class="t" style="left:838.20px;top:462px;font-size:8.5px;color:#333;transform:scaleX(0.9486);font-style:italic;">Une erreur est présente dans cette ligne</div>
<div class="a btn" style="left:9px;top:478px;width:34px;height:20px;border-color:#e8ecef;background:#fafbfc"></div>
<svg style="left:20px;top:485px" width="11" height="7" viewBox="0 0 11 7"><path d="M1.2 5.8L5.5 1.5L9.8 5.8" fill="none" stroke="#a9bac2" stroke-width="2.2"/></svg>
<div class="a pk" style="left:43px;top:478px;width:27px;height:20px;"></div>
<div class="a btn" style="left:70px;top:478px;width:32px;height:20px;border-color:#e8ecef;background:#fafbfc"></div>
<svg style="left:81px;top:485px" width="11" height="7" viewBox="0 0 11 7"><path d="M1.2 1.2L5.5 5.5L9.8 1.2" fill="none" stroke="#a9bac2" stroke-width="2.2"/></svg>
<div class="a " style="left:113px;top:478px;width:158px;height:20px;background:#f3f3f3;border:2px solid #03a9f4;border-radius:3px"></div>
<div class="t" style="left:117.77px;top:484px;font-size:9.5px;color:#888;transform:scaleX(0.9650);">Écrivez pour voir des suggestions</div>
<div class="a bb" style="left:280px;top:478px;width:33px;height:20px;"></div>
<svg style="left:290.5px;top:482px" width="12" height="12" viewBox="0 0 12 12"><circle cx="5" cy="5" r="3.6" fill="none" stroke="#fff" stroke-width="2"/><path d="M7.6 7.6L10.8 10.8" stroke="#fff" stroke-width="2.3" stroke-linecap="round"/></svg>
<div class="a btn" style="left:315px;top:478px;width:33px;height:20px;"></div>
<svg style="left:325.5px;top:482.5px" width="11" height="11" viewBox="0 0 11 11"><path d="M0.5 0.5H5L10.5 6L6 10.5L0.5 5Z" fill="#546e7a" stroke="#546e7a" stroke-linejoin="round"/><circle cx="2.8" cy="2.8" r="1" fill="#f5f7f9"/></svg>
<div class="a inp" style="left:354px;top:478px;width:529px;height:20px;"></div>
<div class="t" style="left:359.23px;top:484px;font-size:9.5px;color:#999;transform:scaleX(1.0190);">Description</div>
<div class="a btn" style="left:890px;top:478px;width:41px;height:20px;border-color:#e8ecef"></div>
<svg style="left:904px;top:482.5px" width="14" height="11" viewBox="0 0 14 11"><ellipse cx="7" cy="4.6" rx="6.2" ry="4" fill="none" stroke="#a8b8c0" stroke-width="1.1"/><path d="M3 8L2 10.6L6 8.6" fill="#fff" stroke="#a8b8c0" stroke-width="1"/></svg>
<div class="a btn" style="left:938px;top:478px;width:26px;height:20px;border-color:#e3e8eb;border-radius:3px 0 0 3px"></div>
<div class="t" style="left:949.34px;top:481px;font-size:11px;color:#90a4ae;transform:scaleX(0.9000);">-</div>
<div class="a pk" style="left:963px;top:478px;width:42px;height:20px;border-radius:0"></div>
<div class="t" style="left:980.74px;top:482px;font-size:10.5px;color:#666;transform:scaleX(0.9300);">1</div>
<div class="a btn" style="left:1004px;top:478px;width:30px;height:20px;border-color:#e3e8eb;border-radius:0 3px 3px 0"></div>
<svg style="left:1013.5px;top:482.5px" width="10" height="10" viewBox="0 0 10 10"><path d="M5.0 0.5V9.5M0.5 5.0H9.5" stroke="#90a4ae" stroke-width="1.4"/></svg>
<div class="a pk" style="left:1047px;top:478px;width:82px;height:20px;"></div>
<div class="t" style="left:1116.92px;top:482px;font-size:10.5px;color:#555;transform:scaleX(0.9300);">0</div>
<div class="a btn" style="left:1135px;top:478px;width:27px;height:20px;border-color:#e8ecef"></div>
<div class="t" style="left:1143.20px;top:480px;font-size:14px;color:#90a4ae;transform:scaleX(0.8503);font-weight:bold;">%</div>
<div class="a btn" style="left:1163px;top:478px;width:27px;height:20px;border-color:#e8ecef"></div>
<svg style="left:1170px;top:483px" width="13" height="10" viewBox="0 0 13 10"><rect x="0.6" y="0.6" width="11.8" height="8.8" fill="none" stroke="#90a4ae" stroke-width="1.2"/><rect x="2.2" y="2.2" width="8.6" height="5.6" fill="#90a4ae"/><circle cx="6.5" cy="5" r="2" fill="#f5f7f9"/></svg>
<div class="a pk" style="left:1196px;top:478px;width:69px;height:20px;"></div>
<div class="t" style="left:1252.92px;top:482px;font-size:10.5px;color:#555;transform:scaleX(0.9300);">0</div>
<div class="a btn" style="left:1271px;top:478px;width:28px;height:20px;border-color:#e8ecef"></div>
<div class="t" style="left:1280.85px;top:481px;font-size:14px;color:#90a4ae;transform:scaleX(1.0782);">$</div>
<div class="a pk" style="left:1305px;top:478px;width:69px;height:20px;"></div>
<div class="t" style="left:1361.92px;top:482px;font-size:10.5px;color:#555;transform:scaleX(0.9300);">0</div>
<div class="a " style="left:9px;top:502px;width:1379px;height:1px;background:#e8e8e8"></div>
<div class="a btn" style="left:12px;top:507px;width:114px;height:36px;"></div>
<div class="t" style="left:52.76px;top:514px;font-size:15px;color:#3e7b2e;transform:scaleX(0.9612);font-weight:bold;">F5</div>
<svg style="left:73.3px;top:514px" width="12" height="12" viewBox="0 0 12 12"><path d="M6.0 0.5V11.5M0.5 6.0H11.5" stroke="#3e7b2e" stroke-width="3.4"/></svg>
<div class="t" style="left:55.90px;top:530px;font-size:8.5px;color:#33691e;transform:scaleX(0.9711);-webkit-text-stroke:0.2px #33691e;">Ajouter</div>
<div class="a btn" style="left:126px;top:507px;width:114px;height:36px;background:#fafbfc;border-color:#e6eaee"></div>
<div class="t" style="left:166.66px;top:514px;font-size:15px;color:#d49a9a;transform:scaleX(0.9640);font-weight:bold;">F6</div>
<div class="a " style="left:186.9px;top:518.3px;width:11.799999999999983px;height:3.5px;background:#d49a9a;border-radius:2px"></div>
<div class="t" style="left:163.32px;top:530px;font-size:8.5px;color:#d49a9a;transform:scaleX(0.9825);">Supprimer</div>
<div class="a btn" style="left:240px;top:507px;width:113px;height:36px;"></div>
<div class="t" style="left:279.44px;top:513px;font-size:15px;color:#3b7dbd;transform:scaleX(0.9874);font-weight:bold;">F7</div>
<svg style="left:300.2px;top:514px" width="13" height="13" viewBox="0 0 13 13"><circle cx="6.5" cy="6.5" r="6.5" fill="#3b7dbd"/><path d="M3.5 2Q5.5 2.5 6 4.5Q4.5 5.5 5 7.5Q3 8 2.5 5.5Z M8 1.2Q10.5 2 11.5 4Q10 4 9 3Z M7.5 8Q9.5 7.5 10.5 9.5Q9 11.5 7.5 11Z" fill="#fff"/></svg>
<div class="t" style="left:280.62px;top:529px;font-size:8.5px;color:#3b7dbd;transform:scaleX(1.0013);">Pièce(s)</div>
<div class="a btn" style="left:353px;top:507px;width:114px;height:36px;"></div>
<div class="a " style="left:378px;top:510px;width:64px;height:30px;background:#fff"></div>
<svg style="left:380px;top:514px" width="63" height="20" viewBox="0 0 63 20"><path d="M1.8 11.2H36.2L35.2 19.7H0.3Z" fill="#b9b6a8"/><path d="M6.3 1.9H47L45 13.1H5.2Z" fill="#1553a8"/><ellipse cx="50.9" cy="7.6" rx="6.6" ry="7" fill="#1553a8"/><path d="M45.5 3.5A6 6 0 0 0 45.5 11.7" fill="none" stroke="#fff" stroke-width="0.5" stroke-dasharray="1 1"/><circle cx="43.8" cy="7.6" r="0.9" fill="#9ccc3a"/><text x="9.3" y="10.4" font-family="Liberation Sans" font-weight="bold" font-style="italic" font-size="11.5" fill="#fff" textLength="29.5" lengthAdjust="spacingAndGlyphs">point</text><text x="51" y="11.5" text-anchor="middle" font-family="Liberation Sans" font-weight="bold" font-size="11.5" fill="#fff">S</text><text x="8.3" y="18.2" font-family="Liberation Sans" font-weight="bold" font-size="4.2" fill="#e8e8e0" letter-spacing="0.8">CANADA</text></svg>
<div class="a btn" style="left:12px;top:545px;width:76px;height:37px;"></div>
<div class="t" style="left:35.84px;top:568px;font-size:8.5px;color:#33691e;transform:scaleX(0.9458);-webkit-text-stroke:0.2px #33691e;">Travaux</div>
<div class="a btn" style="left:88px;top:545px;width:76px;height:37px;"></div>
<div class="t" style="left:105.04px;top:568px;font-size:8.5px;color:#33691e;transform:scaleX(0.9743);-webkit-text-stroke:0.2px #33691e;">Ensembles</div>
<div class="a btn" style="left:164px;top:545px;width:76px;height:37px;"></div>
<div class="t" style="left:184.06px;top:568px;font-size:8.5px;color:#33691e;transform:scaleX(0.9587);-webkit-text-stroke:0.2px #33691e;">Véhicules</div>
<div class="a btn" style="left:240px;top:545px;width:75px;height:37px;"></div>
<div class="t" style="left:265.34px;top:568px;font-size:8.5px;color:#33691e;transform:scaleX(0.9689);-webkit-text-stroke:0.2px #33691e;">Pneus</div>
<div class="a btn" style="left:315px;top:545px;width:76px;height:37px;"></div>
<div class="t" style="left:334.59px;top:568px;font-size:8.5px;color:#33691e;transform:scaleX(0.9648);-webkit-text-stroke:0.2px #33691e;">Carburant</div>
<div class="a bb" style="left:391px;top:545px;width:76px;height:37px;"></div>
<div class="t" style="left:413.74px;top:568px;font-size:8.5px;color:#fff;transform:scaleX(0.9763);-webkit-text-stroke:0.25px #fff;">Rappels</div>
<svg style="left:43px;top:552.5px" width="14" height="14" viewBox="0 0 14 14"><path d="M9.2 0.6A4 4 0 0 0 5.6 5.6L0.9 10.3A1.5 1.5 0 0 0 3.7 13.1L8.4 8.4A4 4 0 0 0 13.4 4.8L11.4 6.1L8.9 5.1L7.9 2.6Z" fill="#33691e"/></svg>
<svg style="left:117.9px;top:552.7px" width="16.5" height="12.5" viewBox="0 0 16.5 12.5"><rect x="0.0" y="0.0" width="4.8" height="3.5" rx="0.7" fill="#33691e"/><rect x="5.5" y="0.0" width="4.8" height="3.5" rx="0.7" fill="#33691e"/><rect x="11.0" y="0.0" width="4.8" height="3.5" rx="0.7" fill="#33691e"/><rect x="0.0" y="4.5" width="4.8" height="3.5" rx="0.7" fill="#33691e"/><rect x="5.5" y="4.5" width="4.8" height="3.5" rx="0.7" fill="#33691e"/><rect x="11.0" y="4.5" width="4.8" height="3.5" rx="0.7" fill="#33691e"/><rect x="0.0" y="9.0" width="4.8" height="3.5" rx="0.7" fill="#33691e"/><rect x="5.5" y="9.0" width="4.8" height="3.5" rx="0.7" fill="#33691e"/><rect x="11.0" y="9.0" width="4.8" height="3.5" rx="0.7" fill="#33691e"/></svg>
<svg style="left:192.8px;top:553.2px" width="17.7" height="13" viewBox="0 0 18 13"><path d="M3.5 1.5Q4 0 5.5 0H12.5Q14 0 14.5 1.5L15.8 5H17Q18 5 18 6V10Q18 10.8 17 10.8H16V12.3Q16 13 15.2 13H13.6Q12.8 13 12.8 12.3V10.8H5.2V12.3Q5.2 13 4.4 13H2.8Q2 13 2 12.3V10.8H1Q0 10.8 0 10V6Q0 5 1 5H2.2Z M4.6 5H13.4L12.5 2H5.5Z" fill="#33691e" fill-rule="evenodd"/><circle cx="3.3" cy="7.8" r="1.5" fill="#f5f7f9"/><circle cx="14.7" cy="7.8" r="1.5" fill="#f5f7f9"/></svg>
<svg style="left:271px;top:553.2px" width="13" height="13" viewBox="0 0 13 13"><circle cx="6.5" cy="6.5" r="5.5" fill="none" stroke="#33691e" stroke-width="2"/></svg>
<svg style="left:345.9px;top:554.1px" width="15" height="12" viewBox="0 0 15 12"><path d="M1.2 12Q0 10 0 7.5A7.5 7.5 0 0 1 15 7.5Q15 10 13.8 12Z" fill="#33691e"/><circle cx="2.8" cy="8.3" r="1.1" fill="#f5f7f9"/><circle cx="3.8" cy="4.2" r="1.1" fill="#f5f7f9"/><circle cx="7.5" cy="2.4" r="1.1" fill="#f5f7f9"/><circle cx="11.2" cy="4.2" r="1.1" fill="#f5f7f9"/><circle cx="12.2" cy="8.3" r="1.1" fill="#f5f7f9"/><path d="M7.3 9.5L8.6 3.8" stroke="#f5f7f9" stroke-width="0.9"/><circle cx="7.2" cy="9.8" r="1.6" fill="#f5f7f9"/></svg>
<svg style="left:422px;top:552.9px" width="15" height="13" viewBox="0 0 15 13"><path d="M3.6 0.3H12.5Q13.2 0.3 13 1L10.8 10.2Q10.6 10.8 10 10.8H1.5Q0.5 10.8 0.3 11.8Q0.2 12.7 1.3 12.7H10.2Q11 12.7 11.3 12L13.8 2.5L14.5 3V3.5L12 12.6Q11.7 13 11 13H1Q-0.4 13 0.1 11.2L2.8 1Q3 0.3 3.6 0.3Z" fill="#fff"/><path d="M5.2 2.3H11M4.7 4.3H10.5" stroke="#7fd0f7" stroke-width="1"/></svg>
<div class="t" style="left:470.58px;top:510px;font-size:9.5px;color:#333;transform:scaleX(1.0800);-webkit-text-stroke:0.15px #333;">Message sur la facture</div>
<div class="a btn" style="left:888px;top:506px;width:34px;height:19px;"></div>
<svg style="left:897px;top:510px" width="15" height="11" viewBox="0 0 15 11"><ellipse cx="7.5" cy="4.5" rx="6.5" ry="3.9" fill="none" stroke="#546e7a" stroke-width="1.1"/><path d="M3.5 7.6L2.5 10.4L6.8 8.3" fill="#f5f7f9" stroke="#546e7a" stroke-width="1"/></svg>
<div class="a inp" style="left:471px;top:526px;width:455px;height:58px;"></div>
<div class="t" style="left:476.74px;top:535px;font-size:9.5px;color:#555;transform:scaleX(0.9597);">Comes from sale #5273, invoice # 100015, Quote # 5273</div>
<svg style="left:914px;top:572px" width="9" height="9" viewBox="0 0 9 9"><path d="M1 8.5L8.5 1M4.5 8.5L8.5 4.5" stroke="#333" stroke-width="1.2"/></svg>
<div class="t" style="left:966.98px;top:525px;font-size:9.5px;color:#333;transform:scaleX(1.0750);">Pièce(s)</div>
<div class="a pk" style="left:1009px;top:520px;width:68px;height:19px;"></div>
<div class="t" style="left:1031.88px;top:525px;font-size:9.5px;color:#444;transform:scaleX(0.9865);">-1 331,35</div>
<div class="t" style="left:958.54px;top:544px;font-size:9.5px;color:#333;transform:scaleX(1.0730);">Service(s)</div>
<div class="a pk" style="left:1009px;top:541px;width:68px;height:19px;"></div>
<div class="t" style="left:1039.37px;top:545px;font-size:9.5px;color:#3b7dbd;transform:scaleX(0.9969);-webkit-text-stroke:0.2px #3b7dbd;">-475,83</div>
<div class="a btn" style="left:936px;top:560px;width:68px;height:20px;"></div>
<div class="t" style="left:966.54px;top:563px;font-size:14px;color:#3b7dbd;transform:scaleX(1.0204);font-weight:bold;">$</div>
<div class="a btn" style="left:1009px;top:560px;width:68px;height:20px;"></div>
<svg style="left:1037px;top:564px" width="12" height="12" viewBox="0 0 12 12"><path d="M5.5 1A5.2 5.2 0 1 0 10.8 6.5H5.5Z" fill="#546e7a"/><path d="M6.6 0A5 5 0 0 1 11.8 5.4H6.6Z" fill="#546e7a"/></svg>
<div class="t" style="left:1110.53px;top:525px;font-size:9.5px;color:#333;transform:scaleX(1.0910);">Sous-total</div>
<div class="a pk" style="left:1162px;top:520px;width:219px;height:19px;"></div>
<div class="t" style="left:1334.88px;top:525px;font-size:9.5px;color:#444;transform:scaleX(0.9865);">-1 807,18</div>
<div class="t" style="left:1116.31px;top:544px;font-size:9.5px;color:#333;transform:scaleX(0.9907);">TPS (5%)</div>
<div class="a pk" style="left:1162px;top:541px;width:70px;height:18px;"></div>
<div class="t" style="left:1198.57px;top:545px;font-size:9.5px;color:#444;transform:scaleX(1.0029);">-90,36</div>
<div class="t" style="left:1244.61px;top:544px;font-size:9.5px;color:#333;transform:scaleX(1.0176);">TVQ (9.975%)</div>
<div class="a pk" style="left:1311px;top:541px;width:70px;height:18px;"></div>
<div class="t" style="left:1342.47px;top:545px;font-size:9.5px;color:#444;transform:scaleX(0.9967);">-180,27</div>
<div class="t" style="left:1135.60px;top:564px;font-size:9.5px;color:#333;transform:scaleX(1.0760);">Total</div>
<div class="a pk" style="left:1162px;top:561px;width:219px;height:19px;"></div>
<div class="t" style="left:1334.88px;top:565px;font-size:9.5px;color:#444;transform:scaleX(0.9877);">-2 077,81</div>
<div class="a br" style="left:13px;top:588px;width:61px;height:33px;"></div>
<div class="a btn" style="left:78px;top:588px;width:62px;height:33px;"></div>
<div class="a btn" style="left:144px;top:588px;width:61px;height:33px;"></div>
<div class="a btn" style="left:209px;top:588px;width:61px;height:33px;"></div>
<div class="a btn" style="left:275px;top:588px;width:61px;height:33px;"></div>
<div class="a btn" style="left:340px;top:588px;width:61px;height:33px;"></div>
<div class="a btn" style="left:406px;top:588px;width:60px;height:33px;"></div>
<div class="a bb" style="left:471px;top:588px;width:61px;height:33px;"></div>
<div class="a btn" style="left:536px;top:588px;width:61px;height:33px;"></div>
<div class="a by" style="left:601px;top:588px;width:61px;height:33px;"></div>
<div class="a btn" style="left:668px;top:588px;width:60px;height:33px;"></div>
<div class="a btn" style="left:732px;top:588px;width:61px;height:33px;"></div>
<div class="a btn" style="left:797px;top:588px;width:61px;height:33px;"></div>
<div class="a btn" style="left:863px;top:588px;width:61px;height:33px;"></div>
<div class="a btn" style="left:928px;top:588px;width:61px;height:33px;"></div>
<div class="a btn" style="left:993px;top:588px;width:61px;height:33px;"></div>
<div class="a btn" style="left:1059px;top:588px;width:61px;height:33px;"></div>
<div class="a bg" style="left:1124px;top:588px;width:61px;height:33px;"></div>
<div class="a bg" style="left:1189px;top:588px;width:64px;height:33px;"></div>
<div class="a bg" style="left:1257px;top:588px;width:62px;height:33px;"></div>
<div class="a bg" style="left:1323px;top:588px;width:61px;height:33px;"></div>
<div class="t" style="left:22.59px;top:593px;font-size:15px;color:#fff;transform:scaleX(1.0320);font-weight:bold;">F12</div>
<svg style="left:52.3px;top:596px" width="10.5" height="10.5" viewBox="0 0 10.5 10.5"><path d="M1.5 1.5L9.0 9.0M9.0 1.5L1.5 9.0" stroke="#fff" stroke-width="3.2" stroke-linecap="round"/></svg>
<div class="t" style="left:30.89px;top:609px;font-size:8.5px;color:#fff;transform:scaleX(0.9010);font-weight:bold;">Quitter</div>
<svg style="left:102.5px;top:594.3px" width="12.5" height="12.5" viewBox="0 0 11 11"><circle cx="5.5" cy="5.5" r="4.6" fill="none" stroke="#546e7a" stroke-width="1.5"/><path d="M5.3 2.8V6H7.6" fill="none" stroke="#546e7a" stroke-width="1.1"/></svg>
<div class="t" style="left:87.52px;top:609px;font-size:8.5px;color:#546e7a;transform:scaleX(0.9978);-webkit-text-stroke:0.1px #546e7a;">Horodateur</div>
<div class="t" style="left:158.33px;top:593px;font-size:15px;color:#3b7dbd;transform:scaleX(0.8930);font-weight:bold;">F1</div>
<svg style="left:178.6px;top:594.8px" width="12" height="12" viewBox="0 0 12 12"><path d="M6.0 0.5V11.5M0.5 6.0H11.5" stroke="#546e7a" stroke-width="3.4"/></svg>
<div class="t" style="left:147.04px;top:609px;font-size:8.5px;color:#546e7a;transform:scaleX(0.9698);-webkit-text-stroke:0.1px #546e7a;">Nouvelle vente</div>
<div class="t" style="left:222.44px;top:593px;font-size:15px;color:#3b7dbd;transform:scaleX(0.9828);font-weight:bold;">F9</div>
<svg style="left:243px;top:592.9px" width="14.5" height="14.5" viewBox="0 0 11 11"><rect x="0.7" y="2.2" width="9.6" height="8.1" rx="0.6" fill="none" stroke="#546e7a" stroke-width="1.1"/><path d="M0.7 4.3H10.3" stroke="#546e7a" stroke-width="1.3"/><path d="M0.7 6.4H10.3M0.7 8.4H10.3M3.1 4.3V10.3M5.5 4.3V10.3M7.9 4.3V10.3" stroke="#546e7a" stroke-width="0.6"/><rect x="2.4" y="0.3" width="1.6" height="3" rx="0.6" fill="none" stroke="#546e7a" stroke-width="0.8"/><rect x="7" y="0.3" width="1.6" height="3" rx="0.6" fill="none" stroke="#546e7a" stroke-width="0.8"/></svg>
<div class="t" style="left:225.80px;top:609px;font-size:8.5px;color:#546e7a;transform:scaleX(0.9460);-webkit-text-stroke:0.1px #546e7a;">Agenda</div>
<div class="t" style="left:285.83px;top:593px;font-size:15px;color:#3b7dbd;transform:scaleX(0.9948);font-weight:bold;">F10</div>
<svg style="left:314.8px;top:594.3px" width="10" height="12" viewBox="0 0 10 12"><path d="M2.2 5.5V3.8A2.8 2.8 0 0 1 7.8 3.8V5.5" fill="none" stroke="#546e7a" stroke-width="1.8"/><rect x="0" y="5.2" width="10" height="6.6" rx="0.8" fill="#546e7a"/></svg>
<div class="t" style="left:286.13px;top:609px;font-size:8.5px;color:#546e7a;transform:scaleX(0.9784);-webkit-text-stroke:0.1px #546e7a;">Fermeture</div>
<svg style="left:363.5px;top:594px" width="13.8" height="13.8" viewBox="0 0 14 14"><path d="M9.2 0.6A4 4 0 0 0 5.6 5.6L0.9 10.3A1.5 1.5 0 0 0 3.7 13.1L8.4 8.4A4 4 0 0 0 13.4 4.8L11.4 6.1L8.9 5.1L7.9 2.6Z" fill="#546e7a"/></svg>
<div class="t" style="left:344.23px;top:609px;font-size:8.5px;color:#546e7a;transform:scaleX(0.9878);-webkit-text-stroke:0.1px #546e7a;">Maintenances</div>
<svg style="left:427px;top:594.3px" width="17.8" height="13.4" viewBox="0 0 18 13"><path d="M3.5 1.5Q4 0 5.5 0H12.5Q14 0 14.5 1.5L15.8 5H17Q18 5 18 6V10Q18 10.8 17 10.8H16V12.3Q16 13 15.2 13H13.6Q12.8 13 12.8 12.3V10.8H5.2V12.3Q5.2 13 4.4 13H2.8Q2 13 2 12.3V10.8H1Q0 10.8 0 10V6Q0 5 1 5H2.2Z M4.6 5H13.4L12.5 2H5.5Z" fill="#546e7a" fill-rule="evenodd"/><circle cx="3.3" cy="7.8" r="1.5" fill="#f5f7f9"/><circle cx="14.7" cy="7.8" r="1.5" fill="#f5f7f9"/></svg>
<div class="t" style="left:417.73px;top:609px;font-size:8.5px;color:#546e7a;transform:scaleX(0.9813);-webkit-text-stroke:0.1px #546e7a;">Parc auto</div>
<svg style="left:494px;top:593.9px" width="15" height="13" viewBox="0 0 15 13"><rect x="0" y="0" width="15" height="3.2" fill="#fff"/><rect x="1" y="4.2" width="13" height="8.8" fill="#fff"/><rect x="5.5" y="5.8" width="4" height="1.2" fill="#03a9f4"/></svg>
<div class="t" style="left:475.50px;top:609px;font-size:8.5px;color:#fff;transform:scaleX(0.9097);font-weight:bold;">Entreposages</div>
<svg style="left:558.5px;top:595px" width="16" height="12" viewBox="0 0 16 12"><rect x="0.6" y="0.6" width="14.8" height="10.8" rx="1" fill="none" stroke="#546e7a" stroke-width="1.2"/><path d="M0.8 1L8.0 7.199999999999999L15.2 1" fill="none" stroke="#546e7a" stroke-width="1.2"/></svg>
<div class="t" style="left:555.33px;top:609px;font-size:8.5px;color:#546e7a;transform:scaleX(0.9766);-webkit-text-stroke:0.1px #546e7a;">Suivis</div>
<svg style="left:625.1px;top:594.3px" width="14" height="13" viewBox="0 0 14 13"><path d="M3.3 4.2A5 5 0 1 1 3.2 9.5" fill="none" stroke="#fff" stroke-width="2.4"/><path d="M0 0.5L0 6.5L6 6.5Z" fill="#fff"/></svg>
<div class="t" style="left:617.21px;top:609px;font-size:8.5px;color:#fff;transform:scaleX(0.8912);font-weight:bold;">Retours</div>
<svg style="left:689px;top:595px" width="16" height="11" viewBox="0 0 16 11"><rect x="0.9" y="0.9" width="14.2" height="9.2" fill="none" stroke="#546e7a" stroke-width="1.8"/><path d="M0.9 3.5Q3.5 3.5 3.5 0.9M12.5 0.9Q12.5 3.5 15.1 3.5M0.9 7.5Q3.5 7.5 3.5 10.1M12.5 10.1Q12.5 7.5 15.1 7.5" fill="#546e7a" stroke="#546e7a" stroke-width="1"/><ellipse cx="8" cy="5.5" rx="2.6" ry="3" fill="none" stroke="#546e7a" stroke-width="1.2"/><path d="M7.5 4.2L8.2 3.8V7.2" stroke="#546e7a" stroke-width="1"/></svg>
<div class="t" style="left:677.50px;top:609px;font-size:8.5px;color:#546e7a;transform:scaleX(0.9460);-webkit-text-stroke:0.1px #546e7a;">À Recevoir</div>
<svg style="left:755px;top:593.9px" width="15" height="12" viewBox="0 0 15 12"><rect x="0" y="0.0" width="2.2" height="1.7" fill="#546e7a"/><rect x="3.2" y="0.0" width="11.8" height="1.7" fill="#546e7a"/><rect x="0" y="2.45" width="2.2" height="1.7" fill="#546e7a"/><rect x="3.2" y="2.45" width="11.8" height="1.7" fill="#546e7a"/><rect x="0" y="4.9" width="2.2" height="1.7" fill="#546e7a"/><rect x="3.2" y="4.9" width="11.8" height="1.7" fill="#546e7a"/><rect x="0" y="7.3500000000000005" width="2.2" height="1.7" fill="#546e7a"/><rect x="3.2" y="7.3500000000000005" width="11.8" height="1.7" fill="#546e7a"/><rect x="0" y="9.8" width="2.2" height="1.7" fill="#546e7a"/><rect x="3.2" y="9.8" width="11.8" height="1.7" fill="#546e7a"/></svg>
<div class="t" style="left:743.22px;top:609px;font-size:8.5px;color:#546e7a;transform:scaleX(1.0030);-webkit-text-stroke:0.1px #546e7a;">Historique</div>
<svg style="left:820.1px;top:592.9px" width="16" height="15" viewBox="0 0 16 15"><path d="M8.3 3.2V0.7H3.6L0.7 3.6V10.2H5" fill="none" stroke="#546e7a" stroke-width="1.3" stroke-linejoin="round"/><path d="M0.9 3.8H3.8V0.9" fill="none" stroke="#546e7a" stroke-width="1.1"/><path d="M8 4H14.9V14.3H5.2V6.8Z" fill="none" stroke="#546e7a" stroke-width="1.3" stroke-linejoin="round"/><path d="M5.4 7H8.2V4.2" fill="none" stroke="#546e7a" stroke-width="1.1"/></svg>
<div class="t" style="left:810.14px;top:609px;font-size:8.5px;color:#546e7a;transform:scaleX(0.9682);-webkit-text-stroke:0.1px #546e7a;">Dupliquer</div>
<svg style="left:886.8px;top:594.8px" width="13" height="13" viewBox="0 0 12 12"><path d="M10.2 4.2A4.6 4.6 0 0 0 1.6 4.6" fill="none" stroke="#546e7a" stroke-width="2"/><path d="M11.6 0.6V5.8H6.4Z" fill="#546e7a"/><path d="M1.8 7.8A4.6 4.6 0 0 0 10.4 7.4" fill="none" stroke="#546e7a" stroke-width="2"/><path d="M0.4 11.4V6.2H5.6Z" fill="#546e7a"/></svg>
<div class="t" style="left:874.26px;top:609px;font-size:8.5px;color:#546e7a;transform:scaleX(0.9459);-webkit-text-stroke:0.1px #546e7a;">Renverser</div>
<svg style="left:951.8px;top:594.4px" width="13" height="12.5" viewBox="0 0 13 12.5"><circle cx="3" cy="3" r="2" fill="none" stroke="#546e7a" stroke-width="2"/><circle cx="10" cy="9.5" r="2" fill="none" stroke="#546e7a" stroke-width="2"/><path d="M10.8 0.5L2.2 12" stroke="#546e7a" stroke-width="2.2"/></svg>
<div class="t" style="left:939.13px;top:609px;font-size:8.5px;color:#546e7a;transform:scaleX(0.9759);-webkit-text-stroke:0.1px #546e7a;">Subdiviser</div>
<svg style="left:1016.9px;top:594.8px" width="14" height="12" viewBox="0 0 14 12"><path d="M0 0.8H2.5L4.5 8.5H12.5" fill="none" stroke="#546e7a" stroke-width="1.5"/><path d="M3.3 2.5H14L13 7H4.3Z" fill="#546e7a"/><circle cx="5.5" cy="10.8" r="1.2" fill="#546e7a"/><circle cx="11.5" cy="10.8" r="1.2" fill="#546e7a"/></svg>
<div class="t" style="left:1006.92px;top:609px;font-size:8.5px;color:#546e7a;transform:scaleX(0.9978);-webkit-text-stroke:0.1px #546e7a;">Boutique</div>
<div class="t" style="left:1084.90px;top:593px;font-size:15px;color:#546e7a;transform:scaleX(1.0327);font-weight:bold;">?</div>
<div class="t" style="left:1081.00px;top:609px;font-size:8.5px;color:#546e7a;transform:scaleX(0.9749);-webkit-text-stroke:0.1px #546e7a;">Aide</div>
<svg style="left:1147.4px;top:594.8px" width="15" height="12" viewBox="0 0 15 12"><rect x="5" y="0" width="10" height="9" fill="#fff"/><path d="M0 5L2 1.8H4.5V9H0Z" fill="#fff"/><path d="M1.2 4.6L2.5 2.8H3.7V4.6Z" fill="#8bc34a"/><circle cx="3" cy="10" r="1.9" fill="#fff" stroke="#8bc34a" stroke-width="0.8"/><circle cx="11" cy="10" r="1.9" fill="#fff" stroke="#8bc34a" stroke-width="0.8"/></svg>
<div class="t" style="left:1128.80px;top:609px;font-size:8.5px;color:#fff;transform:scaleX(0.8994);font-weight:bold;">Bon Livraison</div>
<div class="t" style="left:1199.24px;top:593px;font-size:15px;color:#fff;transform:scaleX(0.9862);font-weight:bold;">F11</div>
<svg style="left:1228.8px;top:593.5px" width="14.3" height="14.3" viewBox="0 0 14 14"><path d="M9.2 0.6A4 4 0 0 0 5.6 5.6L0.9 10.3A1.5 1.5 0 0 0 3.7 13.1L8.4 8.4A4 4 0 0 0 13.4 4.8L11.4 6.1L8.9 5.1L7.9 2.6Z" fill="#fff"/></svg>
<div class="t" style="left:1192.19px;top:609px;font-size:8.5px;color:#fff;transform:scaleX(0.9153);font-weight:bold;">+ Bon de travail</div>
<div class="t" style="left:1269.42px;top:593px;font-size:15px;color:#fff;transform:scaleX(1.0078);font-weight:bold;">F3</div>
<svg style="left:1290px;top:594px" width="16" height="12" viewBox="0 0 16 12"><path d="M11 6.5V11H1V1.5H7" fill="none" stroke="#fff" stroke-width="1.6"/><path d="M4.8 8L5.3 5.6L11 0.2L13.5 2.5L7.6 8.2Z" fill="none" stroke="#fff" stroke-width="1.3"/></svg>
<div class="t" style="left:1271.89px;top:609px;font-size:8.5px;color:#fff;transform:scaleX(0.9203);font-weight:bold;">+ Estimé</div>
<div class="t" style="left:1335.43px;top:593px;font-size:15px;color:#fff;transform:scaleX(0.9924);font-weight:bold;">F4</div>
<svg style="left:1356.2px;top:594px" width="15" height="12" viewBox="0 0 15 12"><path d="M11 6.5V11H1V1H9" fill="none" stroke="#fff" stroke-width="1.7"/><path d="M3.5 4.8L6.5 7.8L13.5 0.8" fill="none" stroke="#fff" stroke-width="2.3"/></svg>
<div class="t" style="left:1335.48px;top:609px;font-size:8.5px;color:#fff;transform:scaleX(0.9396);font-weight:bold;">Paiement</div>
</body></html>
